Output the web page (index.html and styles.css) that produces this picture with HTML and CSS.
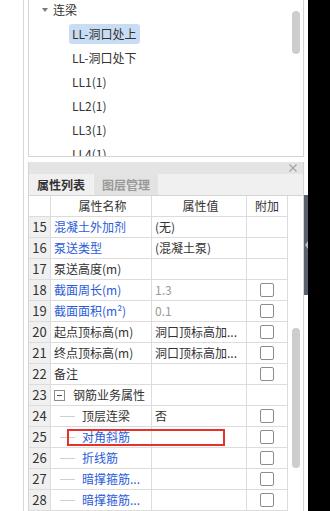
FILE: index.html
```html
<!DOCTYPE html>
<html lang="zh-CN">
<head>
<meta charset="UTF-8">
<meta name="viewport" content="width=device-width, initial-scale=1.0">
<link rel="stylesheet" href="styles.css">
<title>属性列表</title>
</head>
<body>
<div class="main">
  <div class="gutter"></div>
  <div class="spacer"></div>
  <div class="panels">
    <div class="tree-panel">
      <ul class="tree">
        <li class="tree-group"><span class="caret"></span>连梁</li>
        <li class="tree-item"><span class="item-label selected">LL-洞口处上</span></li>
        <li class="tree-item"><span class="item-label">LL-洞口处下</span></li>
        <li class="tree-item"><span class="item-label">LL1(1)</span></li>
        <li class="tree-item"><span class="item-label">LL2(1)</span></li>
        <li class="tree-item"><span class="item-label">LL3(1)</span></li>
        <li class="tree-item"><span class="item-label">LL4(1)</span></li>
      </ul>
      <div class="thumb tree-thumb"></div>
    </div>

    <div class="props-panel">
      <div class="title-bar">
        <svg class="close" width="8" height="8" viewBox="0 0 8 8"><path d="M0.5 0.5L7.5 7.5M7.5 0.5L0.5 7.5" stroke="#a3a3a3" stroke-width="1.2"/></svg>
      </div>
      <div class="tabs">
        <div class="tab active">属性列表</div>
        <div class="tab">图层管理</div>
      </div>
      <div class="grid">
        <div class="row head">
          <div class="num"></div>
          <div class="name">属性名称</div>
          <div class="value">属性值</div>
          <div class="extra">附加</div>
        </div>
        <div class="row">
          <div class="num">15</div>
          <div class="name blue">混凝土外加剂</div>
          <div class="value">(无)</div>
          <div class="extra"></div>
        </div>
        <div class="row">
          <div class="num">16</div>
          <div class="name blue">泵送类型</div>
          <div class="value">(混凝土泵)</div>
          <div class="extra"></div>
        </div>
        <div class="row">
          <div class="num">17</div>
          <div class="name">泵送高度(m)</div>
          <div class="value"></div>
          <div class="extra"></div>
        </div>
        <div class="row">
          <div class="num">18</div>
          <div class="name blue">截面周长(m)</div>
          <div class="value muted">1.3</div>
          <div class="extra"><span class="check"></span></div>
        </div>
        <div class="row">
          <div class="num">19</div>
          <div class="name blue">截面面积(m²)</div>
          <div class="value muted">0.1</div>
          <div class="extra"><span class="check"></span></div>
        </div>
        <div class="row">
          <div class="num">20</div>
          <div class="name">起点顶标高(m)</div>
          <div class="value">洞口顶标高加...</div>
          <div class="extra"><span class="check"></span></div>
        </div>
        <div class="row">
          <div class="num">21</div>
          <div class="name">终点顶标高(m)</div>
          <div class="value">洞口顶标高加...</div>
          <div class="extra"><span class="check"></span></div>
        </div>
        <div class="row">
          <div class="num">22</div>
          <div class="name">备注</div>
          <div class="value"></div>
          <div class="extra"><span class="check"></span></div>
        </div>
        <div class="row">
          <div class="num">23</div>
          <div class="name group"><span class="toggle"></span>钢筋业务属性</div>
          <div class="value"></div>
          <div class="extra"></div>
        </div>
        <div class="row">
          <div class="num">24</div>
          <div class="name child">顶层连梁</div>
          <div class="value">否</div>
          <div class="extra"><span class="check"></span></div>
        </div>
        <div class="row marked">
          <div class="num">25</div>
          <div class="name child blue">对角斜筋</div>
          <div class="value"></div>
          <div class="extra"><span class="check"></span></div>
          <div class="mark"></div>
        </div>
        <div class="row">
          <div class="num">26</div>
          <div class="name child blue">折线筋</div>
          <div class="value"></div>
          <div class="extra"><span class="check"></span></div>
        </div>
        <div class="row">
          <div class="num">27</div>
          <div class="name child blue">暗撑箍筋...</div>
          <div class="value"></div>
          <div class="extra"><span class="check"></span></div>
        </div>
        <div class="row">
          <div class="num">28</div>
          <div class="name child blue">暗撑箍筋...</div>
          <div class="value"></div>
          <div class="extra"><span class="check"></span></div>
        </div>
        <div class="thumb grid-thumb"></div>
      </div>
    </div>
  </div>
  <div class="rail">
    <div class="rail-handle"><span class="rail-arrow"></span></div>
  </div>
</div>
<div class="side"></div>
</body>
</html>
```

FILE: styles.css
```css
html, body {
  margin: 0;
  height: 100%;
}
body {
  font-family: "Noto Sans CJK SC", "Noto Sans", sans-serif;
  font-size: 12px;
  color: #333;
  background: #fff;
  display: flex;
  width: 330px;
  height: 511px;
  overflow: hidden;
}
.main {
  display: flex;
  width: 308px;
  height: 511px;
}
.gutter {
  width: 23px;
  border-right: 1px solid #d9d9d9;
}
.spacer {
  width: 4px;
}
.panels {
  width: 276px;
  display: flex;
  flex-direction: column;
}
.rail {
  width: 4px;
  padding-top: 195px;
}
.rail-handle {
  height: 100px;
  background: #59626c;
  display: flex;
  align-items: center;
  justify-content: center;
}
.rail-arrow {
  width: 0;
  height: 0;
  border-top: 4px solid transparent;
  border-bottom: 4px solid transparent;
  border-right: 3px solid #b8bec4;
}
.side {
  flex: 1;
  background: #000;
}

/* tree */
.tree-panel {
  position: relative;
  height: 156px;
  border: 1px solid #d4d4d4;
  border-top: none;
  overflow: hidden;
}
.tree {
  list-style: none;
  margin: -2px 0 0 0;
  padding: 0;
}
.tree-group {
  height: 24px;
  line-height: 24px;
  padding-left: 13px;
  display: flex;
  align-items: center;
}
.caret {
  width: 0;
  height: 0;
  border-left: 3px solid transparent;
  border-right: 3px solid transparent;
  border-top: 4px solid #7a7a7a;
  margin-right: 5px;
}
.tree-item {
  height: 24px;
  display: flex;
  align-items: center;
  padding-left: 40px;
}
.item-label {
  height: 20px;
  line-height: 20px;
  padding: 0 4px 0 3px;
  border-radius: 3px;
}
.item-label.selected {
  background: #c8ddf3;
}
.thumb {
  position: absolute;
  width: 8px;
  background: #cdcdcd;
  border-radius: 4px;
}
.tree-thumb {
  left: 263px;
  top: 11px;
  height: 43px;
}

/* properties */
.props-panel {
  margin-top: 5px;
  flex: 1;
  display: flex;
  flex-direction: column;
  border-left: 1px solid #d4d4d4;
  border-right: 1px solid #d4d4d4;
}
.title-bar {
  height: 12px;
  background: #e4e4e4;
  display: flex;
  justify-content: flex-end;
  align-items: center;
  padding-right: 6px;
}
.tabs {
  height: 21px;
  background: #f0f0f0;
  border-bottom: 1px solid #d4d4d4;
  display: flex;
}
.tab {
  width: 64px;
  line-height: 21px;
  text-align: center;
  font-weight: bold;
  color: #999;
  background: #e3e3e3;
  border-left: 1px solid #f5f5f5;
}
.tab.active {
  color: #333;
  background: #f0f0f0;
  border-left: none;
}
.grid {
  position: relative;
  flex: 1;
}
.row {
  display: grid;
  grid-template-columns: 22px 101px 95px 41px;
  width: 259px;
  height: 20px;
  border-bottom: 1px solid #dcdcdc;
  line-height: 20px;
}
.row > div {
  border-right: 1px solid #dcdcdc;
  white-space: nowrap;
  overflow: hidden;
}
.num {
  background: #f0f0f0;
  text-align: center;
  font-size: 13px;
}
.head .num {
  background: #fff;
}
.head .name, .head .value, .head .extra {
  text-align: center;
}
.name {
  padding-left: 3px;
}
.value {
  padding-left: 3px;
}
.extra {
  display: flex;
  justify-content: center;
  align-items: center;
}
.blue {
  color: #2a5bd8;
}
.muted {
  color: #9a9a9a;
}
.check {
  width: 12px;
  height: 12px;
  border: 1px solid #8c8c8c;
  border-radius: 2px;
}
.group {
  display: flex;
  align-items: center;
}
.toggle {
  position: relative;
  width: 9px;
  height: 9px;
  border: 1px solid #8c8c8c;
  margin-right: 8px;
}
.toggle::after {
  content: "";
  position: absolute;
  left: 2px;
  top: 4px;
  width: 5px;
  height: 1px;
  background: #555;
}
.child {
  position: relative;
  padding-left: 31px;
}
.child::before {
  content: "";
  position: absolute;
  left: 9px;
  top: 10px;
  width: 15px;
  height: 1px;
  background: #d0d0d0;
}
.marked {
  position: relative;
}
.row > .mark {
  position: absolute;
  left: 38px;
  top: 2px;
  width: 154px;
  height: 13px;
  border: 2px solid #e8312b;
}
.grid-thumb {
  left: 263px;
  top: 132px;
  height: 140px;
}
```
